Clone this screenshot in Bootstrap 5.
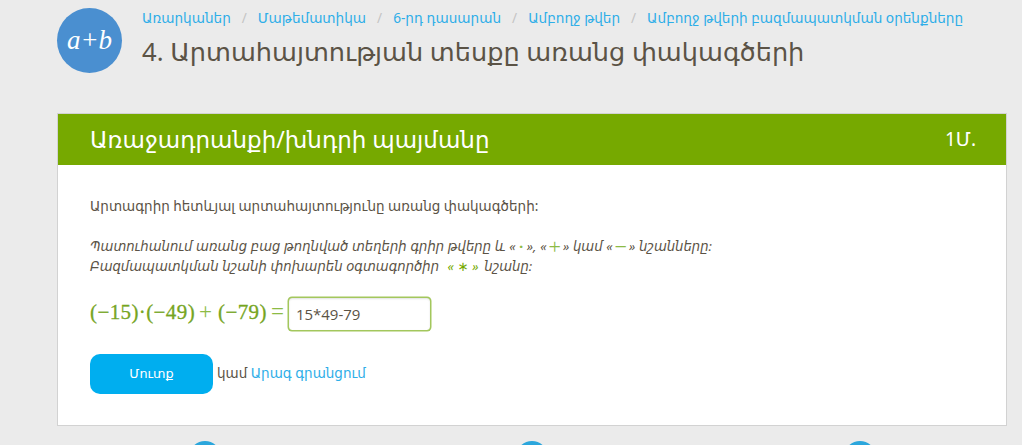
<!DOCTYPE html>
<html lang="hy">
<head>
  <meta charset="UTF-8" />
  <meta name="viewport" content="width=device-width, initial-scale=1.0"/>
  <title>Արտահայտության տեսքը առանց փակագծերի</title>
  <link href="https://cdn.jsdelivr.net/npm/bootstrap@5.3.0/dist/css/bootstrap.min.css" rel="stylesheet"/>
  <style>
    html, body { height: 445px; overflow: hidden; }
    body { background: #ebebeb; color: #5b5346; font-family: "Noto Sans", "DejaVu Sans", sans-serif; font-size: 13.5px; }
    a { color: #2eaee8; text-decoration: none; }
    .page-wrap { padding: 8px 15px 0 57px; }
    .topic-logo { width: 65px; height: 65px; background: #4a8fd0; color: #fff; font-family: "Liberation Serif", serif; font-style: italic; font-size: 27px; }
    .crumbs { --bs-breadcrumb-divider-color: #c4c4c4; --bs-breadcrumb-item-padding-x: 11px; --bs-breadcrumb-margin-bottom: 0; font-size: 13.6px; line-height: 20px; }
    .page-title { font-size: 25.6px; line-height: 38px; font-weight: 400; margin: 5px 0 0; color: #5b5346; }
    .task-panel { margin-top: 40px; height: 313px; border: 1px solid #d2d2d2; border-radius: 0; --bs-card-bg: #fff; }
    .task-head { background: #76a900; color: #fff; height: 51px; padding: 0 30px 0 32px; }
    .task-head h2 { font-size: 23px; font-weight: 400; margin: 0; }
    .task-head span { font-size: 19px; }
    .task-body { padding: 31px 32px 0; }
    .task-body p { line-height: 20px; margin: 0; }
    .task-note { font-style: italic; font-size: 13.2px; word-spacing: .3px; margin-top: 20px !important; }
    .hl { color: #76a900; }
    .big-sign { font-family: "Liberation Serif", serif; font-size: 22px; font-style: normal; line-height: 0; vertical-align: -3px; margin: 0 2px; color: #8dbb45; }
    .star-sign { margin: 0 2px 0 1px; }
    .math-row { margin-top: 21px; gap: 4px; }
    .math-expr { font-family: "Liberation Serif", serif; font-size: 21px; line-height: 24px; margin-bottom: 4px; letter-spacing: .4px; -webkit-text-stroke: .3px #76a51f; color: #76a51f; white-space: nowrap; }
    .math-expr i { font-size: 23px; font-style: normal; -webkit-text-stroke: 0; letter-spacing: 0; color: #8dbb45; margin: 0 6px 0 4px; }
    .math-expr i:last-child { margin-right: 0; }
    .answer-box { width: 143px; height: 34px; border: 1px solid #a3c75d; border-radius: 4px; padding: 0 7px; font-family: "Open Sans", sans-serif; font-size: 15px; color: #5b5346; box-shadow: 0 0 0 .5px #a3c75d, inset 0 1px 2px rgba(0,0,0,.12); }
    .answer-box:focus { border-color: #a3c75d; box-shadow: 0 0 0 .5px #a3c75d, inset 0 1px 2px rgba(0,0,0,.12); color: #5b5346; }
    .enter-btn { width: 123px; height: 40px; background: #00aeef; border: 0; border-radius: 10px; color: #fff; font-size: 12.8px; }
    .enter-btn:hover { background: #00aeef; color: #fff; }
    .submit-row { margin-top: 23px; gap: 4px; }
    .or-text { margin-bottom: 2px; }
    .dots-row { position: relative; }
    .dot-mark { position: absolute; top: 15px; width: 32px; height: 32px; border-radius: 50%; background: #2ba6dc; }
    .dot-1 { left: 132px; }
    .dot-2 { left: 459px; }
    .dot-3 { left: 787px; }
  </style>
</head>
<body>
  <div class="page-wrap">
    <!-- Header -->
    <div class="d-flex gap-3">
      <div class="topic-logo rounded-circle d-flex align-items-center justify-content-center flex-shrink-0">a+b</div>
      <div class="ms-1">
        <nav aria-label="breadcrumb">
          <ol class="breadcrumb crumbs">
            <li class="breadcrumb-item"><a href="#">Առարկաներ</a></li>
            <li class="breadcrumb-item"><a href="#">Մաթեմատիկա</a></li>
            <li class="breadcrumb-item"><a href="#">6-րդ դասարան</a></li>
            <li class="breadcrumb-item"><a href="#">Ամբողջ թվեր</a></li>
            <li class="breadcrumb-item"><a href="#">Ամբողջ թվերի բազմապատկման օրենքները</a></li>
          </ol>
        </nav>
        <h1 class="page-title">4. Արտահայտության տեսքը առանց փակագծերի</h1>
      </div>
    </div>

    <!-- Task -->
    <div class="card task-panel">
      <div class="task-head d-flex align-items-center justify-content-between">
        <h2>Առաջադրանքի/խնդրի պայմանը</h2>
        <span>1Մ.</span>
      </div>
      <div class="task-body">
        <p>Արտագրիր հետևյալ արտահայտությունը առանց փակագծերի:</p>
        <p class="task-note">Պատուհանում առանց բաց թողնված տեղերի գրիր թվերը և «<span class="big-sign">·</span>», «<span class="big-sign">+</span>» կամ «<span class="big-sign">−</span>» նշանները:<br>Բազմապատկման նշանի փոխարեն օգտագործիր &nbsp;<span class="hl star-sign">« ∗ »</span> նշանը:</p>
        <div class="math-row d-flex align-items-center">
          <span class="math-expr">(−15)·(−49)<i>+</i>(−79)<i>=</i></span>
          <input class="form-control answer-box" type="text" value="15*49-79" />
        </div>
        <div class="submit-row d-flex align-items-center">
          <button class="btn enter-btn" type="button">Մուտք</button>
          <span class="or-text">կամ <a href="#">Արագ գրանցում</a></span>
        </div>
      </div>
    </div>

    <div class="dots-row">
      <span class="dot-mark dot-1"></span>
      <span class="dot-mark dot-2"></span>
      <span class="dot-mark dot-3"></span>
    </div>
  </div>
  <script src="https://cdn.jsdelivr.net/npm/bootstrap@5.3.0/dist/js/bootstrap.bundle.min.js"></script>
</body>
</html>
